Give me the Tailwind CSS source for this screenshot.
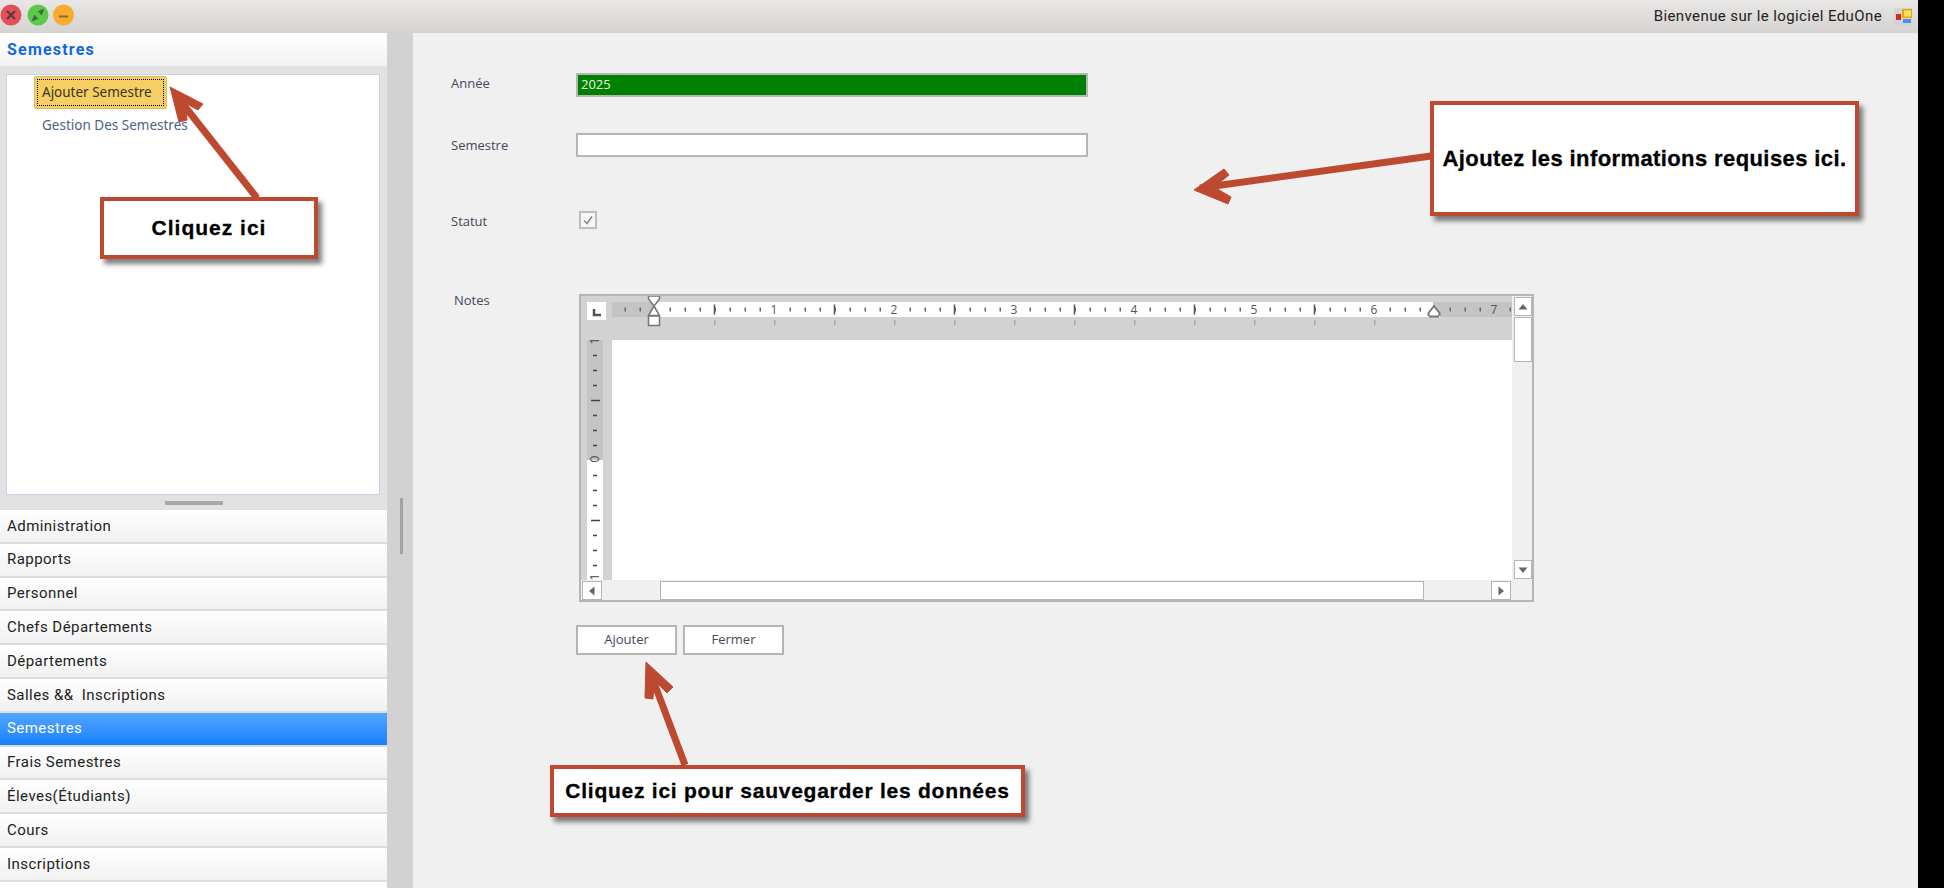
<!DOCTYPE html>
<html lang="fr">
<head>
    <meta charset="UTF-8">
    <title>EduOne - Semestres</title>
    <script src="https://cdn.jsdelivr.net/npm/@tailwindcss/browser@4"></script>
</head>
<body class="bg-black">
    <div class="relative w-[1918px] h-[888px] overflow-hidden flex flex-col bg-[#f0f0f0] font-['Roboto',sans-serif]">
        <!-- Title bar -->
        <div class="h-[33px] shrink-0 flex items-center justify-between bg-gradient-to-b from-[#e9e7e6] to-[#d5d3d1]">
            <svg width="80" height="33" viewBox="0 0 80 33">
                <circle cx="11" cy="15" r="10.5" fill="#e4505a"/>
                <path d="M7 11l8 8M15 11l-8 8" stroke="#5a3a3e" stroke-width="2.2"/>
                <circle cx="38" cy="15" r="10.5" fill="#5cc94a"/>
                <path d="M33 20l4-1.500-2.500-2.500zM43 10l-4 1.500 2.500 2.500z" fill="#3f6b3c" stroke="#3f6b3c" stroke-width="1.500"/>
                <circle cx="63.500" cy="15" r="10.500" fill="#f8ab2c"/>
                <path d="M59 16.500h9" stroke="#8a6a30" stroke-width="2"/>
            </svg>
            <div class="flex items-center pr-[6px]">
                <span class="text-[15px] text-[#222] tracking-[0.4px]">Bienvenue sur le logiciel EduOne</span>
                <svg class="ml-[12px]" width="18" height="18" viewBox="0 0 18 18">
                    <rect width="18" height="18" fill="#d6d4d2"/>
                    <rect x="8" y="1" width="10" height="9" fill="#e0a910"/>
                    <rect x="10" y="2.500" width="7" height="6" fill="#ffdc60"/>
                    <rect x="2" y="6" width="5" height="6" fill="#d42c24"/>
                    <rect x="9" y="11" width="8" height="4" fill="#4f8fe8"/>
                </svg>
            </div>
        </div>

        <div class="flex-1 flex min-h-0">
            <!-- Sidebar -->
            <div class="w-[387px] shrink-0 flex flex-col bg-[#e2e2e2]">
                <div class="h-[33px] shrink-0 flex items-center pl-[7px] bg-gradient-to-b from-white to-[#f2f2f2] text-[16px] font-bold text-[#1168dc] tracking-[1.2px]">Semestres</div>
                <div class="h-[421px] shrink-0 ml-[6px] mr-[7px] mt-[8px] bg-white border border-[#c4d3e6] text-[13.5px] font-['Noto_Sans',sans-serif]">
                    <div class="ml-[27px] mt-[1px] w-[133px] h-[33px] p-[2px] bg-[#f6cf64] border border-[#dcb95a] rounded-[2px]">
                        <div class="h-full border border-dotted border-black flex items-center pl-[4px] text-[#3a3420]">Ajouter Semestre</div>
                    </div>
                    <div class="ml-[35px] mt-[6px] text-[#4b6284]">Gestion Des Semestres</div>
                </div>
                <div class="h-[15px] shrink-0 flex items-center justify-center">
                    <div class="w-[58px] h-[4px] bg-[#a8a8a8]"></div>
                </div>
                <nav class="text-[15px] text-[#222] tracking-[0.45px]">
                    <div class="h-[33.8px] flex items-center pl-[7px] bg-gradient-to-b from-white to-[#f1f1f1] border-b-2 border-[#dcdcdc]">Administration</div>
                    <div class="h-[33.8px] flex items-center pl-[7px] bg-gradient-to-b from-white to-[#f1f1f1] border-b-2 border-[#dcdcdc]">Rapports</div>
                    <div class="h-[33.8px] flex items-center pl-[7px] bg-gradient-to-b from-white to-[#f1f1f1] border-b-2 border-[#dcdcdc]">Personnel</div>
                    <div class="h-[33.8px] flex items-center pl-[7px] bg-gradient-to-b from-white to-[#f1f1f1] border-b-2 border-[#dcdcdc]">Chefs Départements</div>
                    <div class="h-[33.8px] flex items-center pl-[7px] bg-gradient-to-b from-white to-[#f1f1f1] border-b-2 border-[#dcdcdc]">Départements</div>
                    <div class="h-[33.8px] flex items-center pl-[7px] bg-gradient-to-b from-white to-[#f1f1f1] border-b-2 border-[#dcdcdc] whitespace-pre">Salles &amp;&amp;  Inscriptions</div>
                    <div class="h-[33.8px] flex items-center pl-[7px] bg-gradient-to-b from-[#52a5ff] to-[#1180ff] border-b-2 border-[#dcdcdc] text-white">Semestres</div>
                    <div class="h-[33.8px] flex items-center pl-[7px] bg-gradient-to-b from-white to-[#f1f1f1] border-b-2 border-[#dcdcdc]">Frais Semestres</div>
                    <div class="h-[33.8px] flex items-center pl-[7px] bg-gradient-to-b from-white to-[#f1f1f1] border-b-2 border-[#dcdcdc]">Éleves(Étudiants)</div>
                    <div class="h-[33.8px] flex items-center pl-[7px] bg-gradient-to-b from-white to-[#f1f1f1] border-b-2 border-[#dcdcdc]">Cours</div>
                    <div class="h-[33.8px] flex items-center pl-[7px] bg-gradient-to-b from-white to-[#f1f1f1] border-b-2 border-[#dcdcdc]">Inscriptions</div>
                    <div class="h-[33.8px] bg-white"></div>
                </nav>
            </div>

            <!-- Splitter -->
            <div class="w-[26px] shrink-0 bg-[#d2d2d2] pt-[465px] pl-[13px]">
                <div class="w-[3px] h-[56px] bg-[#a2a2a2]"></div>
            </div>

            <!-- Form -->
            <div class="flex-1 pt-[40px] pl-[38px] text-[13px] text-[#44485a] font-['Open_Sans',sans-serif]">
                <div class="flex items-center h-[24px]">
                    <label class="w-[125px] -mt-[2px]">Année</label>
                    <div class="w-[512px] h-[24px] pl-[3px] flex items-center bg-[#008000] border-2 border-[#b5b5b5] text-[#e8f4e0]">2025</div>
                </div>
                <div class="flex items-center h-[24px] mt-[36px]">
                    <label class="w-[125px] mt-[1px]">Semestre</label>
                    <div class="w-[512px] h-[24px] bg-white border-2 border-[#b5b5b5]"></div>
                </div>
                <div class="flex items-center h-[18px] mt-[54px]">
                    <label class="w-[128px] mt-[4px]">Statut</label>
                    <div class="w-[18px] h-[18px] bg-[#f6f6f6] border-2 border-[#bdbdbd] flex items-center justify-center">
                        <svg width="12" height="12" viewBox="0 0 12 12"><path d="M2 6.500l3 3 5-7" fill="none" stroke="#8a8a8a" stroke-width="1.500"/></svg>
                    </div>
                </div>
                <div class="flex mt-[65px]">
                    <label class="w-[125px] pl-[3px] -mt-[3px]">Notes</label>
                    <!-- Rich text editor -->
                    <div class="ml-[3px] w-[955px] h-[308px] border-2 border-[#b5b5b5] flex flex-col">
                        <div class="flex h-[284px]">
                            <div class="w-[931px] flex flex-col">
                                <svg class="block shrink-0" width="931" height="44" viewBox="581 296 931 44">
                                    <rect x="581" y="296" width="931" height="44" fill="#d2d2d2"/>
                                    <rect x="612" y="302" width="42" height="15" fill="#c4c4c4"/>
                                    <rect x="654" y="302" width="779" height="15" fill="#fff"/>
                                    <rect x="1433" y="302" width="79" height="15" fill="#c4c4c4"/>
                                    <rect x="587" y="302" width="19" height="18" fill="#fff"/>
                                    <path d="M594 309v6h7" fill="none" stroke="#555" stroke-width="2.500"/>
                                    <line x1="624.500" y1="309.500" x2="1512" y2="309.500" stroke="#666" stroke-width="4" stroke-dasharray="1.500 13.500"/>
                                    <path d="M714.500 304.500v10M834.500 304.500v10M954.500 304.500v10M1074.500 304.500v10M1194.500 304.500v10M1314.500 304.500v10" stroke="#555" stroke-width="1.500"/>
                                    <line x1="714" y1="322.500" x2="1380" y2="322.500" stroke="#aaa" stroke-width="5" stroke-dasharray="1.500 58.500"/>
                                    <rect x="768" y="303" width="12" height="13" fill="#fff"/>
                                    <rect x="888" y="303" width="12" height="13" fill="#fff"/>
                                    <rect x="1008" y="303" width="12" height="13" fill="#fff"/>
                                    <rect x="1128" y="303" width="12" height="13" fill="#fff"/>
                                    <rect x="1248" y="303" width="12" height="13" fill="#fff"/>
                                    <rect x="1368" y="303" width="12" height="13" fill="#fff"/>
                                    <rect x="1488" y="303" width="12" height="13" fill="#c4c4c4"/>
                                    <g font-family="Open Sans, sans-serif" font-size="12" fill="#555" text-anchor="middle">
                                        <text x="774" y="314">1</text>
                                        <text x="894" y="314">2</text>
                                        <text x="1014" y="314">3</text>
                                        <text x="1134" y="314">4</text>
                                        <text x="1254" y="314">5</text>
                                        <text x="1374" y="314">6</text>
                                        <text x="1494" y="314">7</text>
                                    </g>
                                    <path d="M648.500 296h11v3l-5.500 7-5.500-7zM654 306l5.500 9.500h-11zM648.500 316h11v9.500h-11z" fill="#fff" stroke="#777" stroke-width="1.500"/>
                                    <path d="M1434 306l6 7v4h-12v-4z" fill="#fff" stroke="#777" stroke-width="0"/>
                                    <path d="M1429 316.500h10M1428.500 316v-3l5.500-7 5.500 7v3" fill="none" stroke="#777" stroke-width="2"/>
                                </svg>
                                <div class="flex h-[240px]">
                                    <svg class="block shrink-0 overflow-visible" width="31" height="240" viewBox="581 340 31 240">
                                        <rect x="581" y="340" width="31" height="240" fill="#d2d2d2"/>
                                        <rect x="587" y="340" width="16" height="120" fill="#c4c4c4"/>
                                        <rect x="587" y="460" width="16" height="120" fill="#fff"/>
                                        <path d="M593 355.500h4M593 370.500h4M593 385.500h4M591 400.500h9M593 415.500h4M593 430.500h4M593 445.500h4M593 475.500h4M593 490.500h4M593 505.500h4M591 520.500h9M593 535.500h4M593 550.500h4M593 565.500h4" stroke="#444" stroke-width="1.500"/>
                                        <g font-family="Open Sans, sans-serif" font-size="12" fill="#444" text-anchor="middle">
                                            <text transform="translate(599 341) rotate(-90)">1</text>
                                            <text transform="translate(599 459) rotate(-90)">0</text>
                                            <text transform="translate(599 577) rotate(-90)">1</text>
                                        </g>
                                    </svg>
                                    <div class="flex-1 bg-white"></div>
                                </div>
                            </div>
                            <!-- Vertical scrollbar -->
                            <div class="w-[20px] flex flex-col items-center pt-[1px] pl-[1px]">
                                <div class="w-[18px] h-[19px] bg-white border border-[#b5b5b5] flex items-center justify-center">
                                    <svg width="10" height="6" viewBox="0 0 10 6"><path d="M5 0l4.500 5.500h-9z" fill="#666"/></svg>
                                </div>
                                <div class="w-[18px] h-[45px] mt-[1px] bg-white border border-[#b5b5b5]"></div>
                                <div class="w-[18px] h-[19px] mt-[198px] bg-white border border-[#b5b5b5] flex items-center justify-center">
                                    <svg width="10" height="6" viewBox="0 0 10 6"><path d="M5 6l4.500-5.500h-9z" fill="#666"/></svg>
                                </div>
                            </div>
                        </div>
                        <!-- Horizontal scrollbar -->
                        <div class="flex items-start h-[20px] pt-[1px] pl-[1px]">
                            <div class="w-[20px] h-[19px] bg-white border border-[#b5b5b5] flex items-center justify-center">
                                <svg width="6" height="10" viewBox="0 0 6 10"><path d="M0 5l5.500-4.500v9z" fill="#666"/></svg>
                            </div>
                            <div class="w-[764px] h-[19px] ml-[58px] bg-white border border-[#b5b5b5]"></div>
                            <div class="w-[20px] h-[19px] ml-[67px] bg-white border border-[#b5b5b5] flex items-center justify-center">
                                <svg width="6" height="10" viewBox="0 0 6 10"><path d="M6 5L.500.500v9z" fill="#666"/></svg>
                            </div>
                        </div>
                    </div>
                </div>
                <div class="flex gap-[6px] ml-[125px] mt-[23px]">
                    <button class="w-[101px] h-[30px] bg-white border-2 border-[#b5b5b5]">Ajouter</button>
                    <button class="w-[101px] h-[30px] bg-white border-2 border-[#b5b5b5]">Fermer</button>
                </div>
            </div>
        </div>

        <!-- Annotations -->
        <svg class="absolute inset-0 pointer-events-none" width="1918" height="888" viewBox="0 0 1918 888" fill="none" stroke="#bd4a30" stroke-width="7">
            <path d="M257 198L175 94"/>
            <path d="M170 87l33 17-5 6-13-7 2 17-8 2z" fill="#bd4a30" stroke-width="1"/>
            <path d="M1431 156L1200 188"/>
            <path d="M1194 190l30-21 5 6-15 12 17 10-3 7z" fill="#bd4a30" stroke-width="1"/>
            <path d="M685 765L650 672"/>
            <path d="M646 662l27 25-6 6-13-13-1 19-8-1z" fill="#bd4a30" stroke-width="1"/>
        </svg>
        <div class="absolute left-[100px] top-[197px] w-[218px] h-[62px] flex items-center justify-center bg-white border-4 border-[#bd4a30] shadow-[4px_5px_5px_rgba(0,0,0,0.5)] font-['Liberation_Sans',sans-serif] font-bold text-[21px] text-black tracking-[1px] [-webkit-text-stroke:0.3px_black]">Cliquez ici</div>
        <div class="absolute left-[1430px] top-[101px] w-[429px] h-[115px] flex items-center justify-center bg-white border-4 border-[#bd4a30] shadow-[4px_5px_5px_rgba(0,0,0,0.5)] font-['Liberation_Sans',sans-serif] font-bold text-[22px] text-black tracking-[0.4px] [-webkit-text-stroke:0.3px_black]">Ajoutez les informations requises ici.</div>
        <div class="absolute left-[550px] top-[765px] w-[475px] h-[52px] flex items-center justify-center bg-white border-4 border-[#bd4a30] shadow-[4px_5px_5px_rgba(0,0,0,0.5)] font-['Liberation_Sans',sans-serif] font-bold text-[21px] text-black tracking-[0.75px] [-webkit-text-stroke:0.3px_black]">Cliquez ici pour sauvegarder les données</div>
    </div>
</body>
</html>
